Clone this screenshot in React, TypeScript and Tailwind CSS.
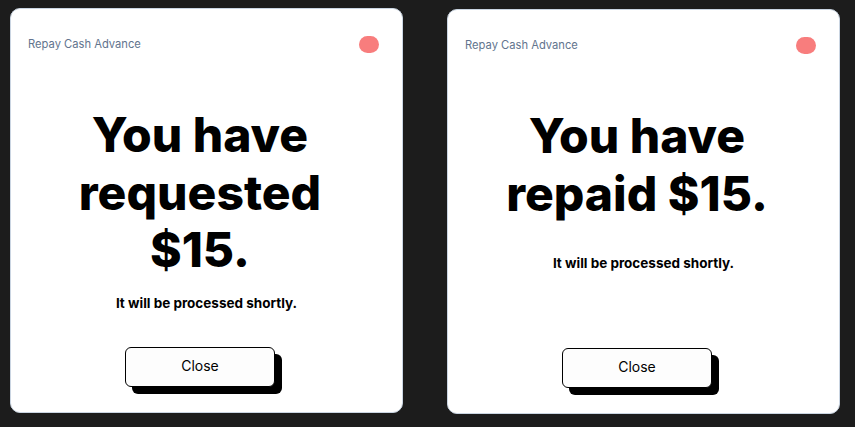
function RepayCard({
  lines,
  gap,
  offset,
}: {
  lines: string[];
  gap: string;
  offset: string;
}) {
  return (
    <div
      className={`flex flex-col w-[393px] h-[405px] bg-white border border-slate-300 rounded-[10px] ${offset}`}
    >
      <div className="flex items-center justify-between pl-[17px] pr-[23px] pt-[27px]">
        <span className="text-[11.2px] text-slate-500">Repay Cash Advance</span>
        <span className="w-[20px] h-[17px] rounded-full bg-[#f87d7d]" />
      </div>

      <h1 className="mt-[53px] pr-[13px] text-center text-[48px] font-extrabold leading-[57.5px] text-black">
        {lines.map((l) => (
          <div key={l}>{l}</div>
        ))}
      </h1>
      <p className={`text-center text-[13.5px] font-bold text-black ${gap}`}>
        It will be processed shortly.
      </p>

      <div className="mt-auto pb-[25px] pl-[114px]">
        <button className="w-[150px] h-[40px] rounded-md border border-black bg-[#fdfdfd] pb-[2px] text-sm text-black shadow-[7px_7px_0_0_#000]">
          Close
        </button>
      </div>
    </div>
  );
}

export default function App() {
  return (
    <div
      className="w-[855px] h-[427px] bg-[#1c1c1c] flex items-start gap-[44px] pl-[10px] pt-[8px]"
      style={{ fontFamily: 'Inter, "Liberation Sans", sans-serif' }}
    >
      <RepayCard lines={['You have', 'requested', '$15.']} gap="mt-[14px]" offset="" />
      <RepayCard lines={['You have', 'repaid $15.']} gap="mt-[31px]" offset="mt-[1px]" />
    </div>
  );
}
